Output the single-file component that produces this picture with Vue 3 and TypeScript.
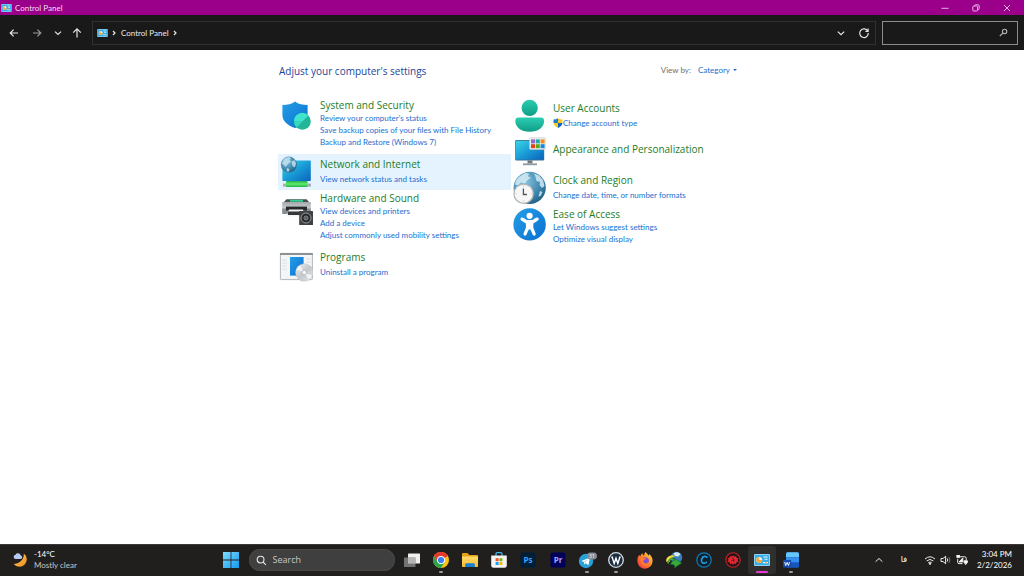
<script setup lang="ts">
import { ref } from 'vue'

interface Category {
  id: string
  title: string
  links: string[]
  shield?: boolean
}

const left: Category[] = [
  { id: 'security', title: 'System and Security', links: ["Review your computer's status", 'Save backup copies of your files with File History', 'Backup and Restore (Windows 7)'] },
  { id: 'network', title: 'Network and Internet', links: ['View network status and tasks'] },
  { id: 'hardware', title: 'Hardware and Sound', links: ['View devices and printers', 'Add a device', 'Adjust commonly used mobility settings'] },
  { id: 'programs', title: 'Programs', links: ['Uninstall a program'] },
]
const right: Category[] = [
  { id: 'users', title: 'User Accounts', links: ['Change account type'], shield: true },
  { id: 'appearance', title: 'Appearance and Personalization', links: [] },
  { id: 'clock', title: 'Clock and Region', links: ['Change date, time, or number formats'] },
  { id: 'ease', title: 'Ease of Access', links: ['Let Windows suggest settings', 'Optimize visual display'] },
]
const columns = [left, right]

const active = ref('network')
const query = ref('')
const taskQuery = ref('')

interface TaskApp {
  id: string
  label: string
  state?: 'open' | 'current'
}
const apps: TaskApp[] = [
  { id: 'taskview', label: 'Task View' },
  { id: 'chrome', label: 'Google Chrome', state: 'open' },
  { id: 'folder', label: 'File Explorer' },
  { id: 'store', label: 'Microsoft Store' },
  { id: 'ps', label: 'Photoshop' },
  { id: 'pr', label: 'Premiere Pro' },
  { id: 'telegram', label: 'Telegram', state: 'open' },
  { id: 'w', label: 'W', state: 'open' },
  { id: 'firefox', label: 'Firefox' },
  { id: 'idm', label: 'Download Manager' },
  { id: 'c', label: 'C' },
  { id: 'gear', label: 'Tools' },
  { id: 'cpl', label: 'Control Panel', state: 'current' },
  { id: 'word', label: 'Word', state: 'open' },
]
</script>

<template>
  <div class="window">
    <svg class="defs" width="0" height="0" aria-hidden="true">
      <defs>
        <linearGradient id="gBlue" x1="0" y1="0" x2="1" y2="1"><stop offset="0" stop-color="#249fe6" /><stop offset="1" stop-color="#0a6fd0" /></linearGradient>
        <linearGradient id="gScreen" x1="0" y1="0" x2="1" y2="1"><stop offset="0" stop-color="#3bd5e6" /><stop offset=".5" stop-color="#1a9bd6" /><stop offset="1" stop-color="#0964bd" /></linearGradient>
        <linearGradient id="gTeal" x1="0" y1="0" x2="0" y2="1"><stop offset="0" stop-color="#2bcdb2" /><stop offset="1" stop-color="#0e9e86" /></linearGradient>
        <linearGradient id="gGreen" x1="0" y1="0" x2="0" y2="1"><stop offset="0" stop-color="#22b04a" /><stop offset=".5" stop-color="#62ee6c" /><stop offset="1" stop-color="#22b04a" /></linearGradient>
        <linearGradient id="gMetal" x1="0" y1="0" x2="0" y2="1"><stop offset="0" stop-color="#a4a8ab" /><stop offset="1" stop-color="#e2e5e7" /></linearGradient>
        <linearGradient id="gDisc" x1="0" y1="0" x2="1" y2="1"><stop offset="0" stop-color="#f2f3f4" /><stop offset=".5" stop-color="#c3c8cc" /><stop offset="1" stop-color="#e6e8ea" /></linearGradient>
        <radialGradient id="gGlobe" cx=".35" cy=".3" r=".8"><stop offset="0" stop-color="#8cc4e0" /><stop offset=".6" stop-color="#4189af" /><stop offset="1" stop-color="#1f5a7e" /></radialGradient>
        <linearGradient id="gWin" x1="0" y1="0" x2="1" y2="1"><stop offset="0" stop-color="#7fdcfc" /><stop offset="1" stop-color="#1497f0" /></linearGradient>
        <linearGradient id="gMoon" x1="0" y1="0" x2="1" y2="1"><stop offset="0" stop-color="#ffd75e" /><stop offset="1" stop-color="#f0861c" /></linearGradient>
        <linearGradient id="gFox" x1="1" y1="0" x2="0" y2="1"><stop offset="0" stop-color="#ffe14a" /><stop offset=".45" stop-color="#ff8b25" /><stop offset="1" stop-color="#f3264f" /></linearGradient>
        <linearGradient id="gFolder" x1="0" y1="0" x2="0" y2="1"><stop offset="0" stop-color="#ffdc6b" /><stop offset="1" stop-color="#f8b92c" /></linearGradient>
        <symbol id="cpl" viewBox="0 0 16 12">
          <rect width="16" height="12" rx="1" fill="#8ad4f6" /><rect x="1" y="1" width="14" height="10" fill="#3badE6" />
          <circle cx="5.2" cy="6" r="3" fill="#e9f7fd" /><path d="M5.2 6V3a3 3 0 1 0 3 3z" fill="#f5a83c" />
          <path d="M9.5 3h4M10.5 5.2h3M9 8.6h5" stroke="#e9f7fd" stroke-width="1.1" /><circle cx="12" cy="8.6" r=".9" fill="#f5a83c" />
        </symbol>
      </defs>
    </svg>

    <header class="titlebar">
      <svg class="mini" viewBox="0 0 16 12"><use href="#cpl" /></svg>
      <h1 class="wtitle">Control Panel</h1>
      <div class="winbtns">
        <button aria-label="Minimize"><svg viewBox="0 0 10 10"><path d="M1.5 5.3h7" /></svg></button>
        <button aria-label="Restore"><svg viewBox="0 0 10 10"><rect x="1.8" y="3" width="4.8" height="5" rx="1" /><path d="M3.5 3V2.6Q3.5 1.8 4.4 1.8H7Q8.2 1.8 8.2 3v2.6q0 1-1 1h-.4" /></svg></button>
        <button aria-label="Close"><svg viewBox="0 0 10 10"><path d="M2 2l6 6M8 2l-6 6" /></svg></button>
      </div>
    </header>

    <nav class="navbar">
      <div class="navbtns">
        <button aria-label="Back"><svg viewBox="0 0 12 12"><path d="M10 6H2.3M5.6 2.6 2.2 6l3.4 3.4" /></svg></button>
        <button aria-label="Forward" class="dim"><svg viewBox="0 0 12 12"><path d="M2 6h7.700M6.400 2.600 9.800 6 6.400 9.400" /></svg></button>
        <button aria-label="Recent locations" class="narrow"><svg viewBox="0 0 12 12"><path d="M3 4.600 6 7.500l3-2.900" /></svg></button>
        <button aria-label="Up" class="narrow"><svg viewBox="0 0 12 12"><path d="M6 10.500V1.900M2.200 5.600 6 1.800l3.800 3.800" /></svg></button>
      </div>
      <div class="address">
        <svg class="mini" viewBox="0 0 16 12"><use href="#cpl" /></svg>
        <svg class="sep" viewBox="0 0 6 8"><path d="M2 2l2 2-2 2" /></svg>
        <a href="#" class="crumb">Control Panel</a>
        <svg class="sep" viewBox="0 0 6 8"><path d="M2 2l2 2-2 2" /></svg>
        <span class="grow"></span>
        <button aria-label="Previous locations"><svg viewBox="0 0 12 12"><path d="M2.8 4.6 6 7.6l3.2-3" /></svg></button>
        <button aria-label="Refresh"><svg viewBox="0 0 12 12"><path d="M9.8 4.2A4.3 4.3 0 1 0 10.3 6M10.1 1.6v2.8H7.4" /></svg></button>
      </div>
      <label class="search">
        <input v-model="query" type="text" aria-label="Search Control Panel" />
        <svg viewBox="0 0 12 12"><circle cx="7.2" cy="4.8" r="2.4" /><path d="M5.4 6.6 2 9.8" /></svg>
      </label>
    </nav>

    <main class="content">
      <div class="panel">
        <div class="heading">
          <h2>Adjust your computer's settings</h2>
          <div class="viewby"><span>View by:</span><button>Category<i class="caret"></i></button></div>
        </div>
        <div class="columns">
          <div v-for="(col, ci) in columns" :key="ci" class="column">
            <section
              v-for="c in col" :key="c.id" class="item"
              :class="{ tall: c.links.length > 1, active: active === c.id, single: !c.links.length }"
              @mouseenter="active = c.id"
            >
              <svg class="icon" viewBox="0 0 34 34" aria-hidden="true">
                <g v-if="c.id === 'security'">
                  <path d="M16 3.6C19.500 6.300 23.500 7 28.600 7v10c0 6-5 10.200-12.600 13C8.400 27.200 3.400 23 3.400 17V7C8.500 7 12.500 6.300 16 3.600z" fill="url(#gBlue)" />
                  <circle cx="23.400" cy="23.400" r="8.400" fill="#22b597" />
                  <path d="M15 23.400a8.400 8.400 0 0 1 14.400-5.900L23.400 23.400z" fill="#3fe4cd" /><path d="M15 23.400h8.400l-5.800 6A8.400 8.400 0 0 1 15 23.400z" fill="#35d9bd" />
                </g>
                <g v-else-if="c.id === 'network'">
                  <rect x="3.400" y="5.400" width="28.400" height="20.600" rx=".8" fill="url(#gScreen)" />
                  <rect x="4" y="28.600" width="28" height="3" fill="#a3aeb4" />
                  <rect x="7" y="26" width="21.600" height="6" rx="1" fill="url(#gGreen)" />
                  <circle cx="9.800" cy="9.600" r="8" fill="url(#gGlobe)" />
                  <path d="M5.500 3.500l4-1.600 2.500 1-1.500 2 1.500 1.500-3 2.600-2.500 3-2-2.500-1.800-1zM12.500 6.500l3-1.200 1.600 3-1.200 4.200-2.400-1.500zM8 13l2.500 1-1 3-2-1z" fill="#bfe0ee" opacity=".85" />
                </g>
                <g v-else-if="c.id === 'hardware'">
                  <path d="M7.500 8.200h20l3 3.200h-26z" fill="#4a4e51" /><rect x="11" y="8.800" width="13" height="2" fill="#35c890" />
                  <rect x="3.200" y="11" width="28.600" height="10.600" rx="1" fill="url(#gMetal)" /><path d="M3.200 17.500h28.600V23H3.200z" fill="#898e92" />
                  <rect x="7" y="15.600" width="21" height="4" fill="#27292b" /><path d="M10 18.500h14l2 7H7.500z" fill="#f1f3f4" /><path d="M9 20.500h13v3.500H9z" fill="#35383a" />
                  <rect x="20.200" y="20" width="13.800" height="14" rx=".6" fill="#3e4041" />
                  <circle cx="27" cy="27" r="5" fill="#25282a" stroke="#a6a9ab" stroke-width=".9" /><circle cx="27" cy="27" r="2.100" fill="#5b5e60" stroke="#939698" stroke-width=".7" />
                </g>
                <g v-else-if="c.id === 'programs'">
                  <rect x="1.400" y="5.400" width="32" height="26.200" rx=".8" fill="#f4f5f6" stroke="#aaafb2" stroke-width=".9" />
                  <path d="M1 5h32.800v2H1z" fill="#8c9195" />
                  <path d="M3.500 12h4M3.500 15h4M3.500 18h4M3.500 21h4M27.500 11h4M27.500 14h4" stroke="#d8dbde" stroke-width=".9" />
                  <rect x="11" y="9" width="13.600" height="18.600" fill="url(#gBlue)" />
                  <circle cx="25.300" cy="24.500" r="8.800" fill="url(#gDisc)" stroke="#b4b9bd" stroke-width=".4" /><path d="M25.300 24.500l-7.800-3a8.300 8.300 0 0 1 3.400-4zM25.300 24.500l7.800 3a8.300 8.300 0 0 1-3.400 4z" fill="#fff" opacity=".7" />
                  <circle cx="25.300" cy="24.500" r="2.400" fill="#eceef0" stroke="#a4a9ad" stroke-width=".6" /><circle cx="25.300" cy="24.500" r=".9" fill="#fff" />
                </g>
                <g v-else-if="c.id === 'users'">
                  <circle cx="17.700" cy="8.900" r="8.100" fill="url(#gTeal)" />
                  <path d="M6.700 18.600h22a3.400 3.400 0 0 1 3.400 3.400c0 6-5.600 10.800-14.400 10.800S3.300 28 3.300 22a3.400 3.400 0 0 1 3.400-3.400z" fill="url(#gTeal)" />
                </g>
                <g v-else-if="c.id === 'appearance'">
                  <rect x="3.200" y="5" width="29" height="20.400" rx="1" fill="#3b6f93" /><rect x="4" y="5.800" width="27.400" height="18.800" fill="url(#gScreen)" />
                  <path d="M15.500 25.400h5v3h-5z" fill="#70787e" /><path d="M11 28.400h14v1.800H11z" fill="#8f979c" />
                  <rect x="17.600" y="2.600" width="16.200" height="12" rx="1" fill="#eceeef" stroke="#c9cdd0" stroke-width=".5" />
                  <path d="M19 4.400h4v4h-4z" fill="#9b64c8" /><path d="M23.800 4.400h4v4h-4z" fill="#19b1a0" /><path d="M28.600 4.400h4v4h-4z" fill="#f78c1b" />
                  <path d="M19 9.200h4v4h-4z" fill="#e2431e" /><path d="M23.800 9.200h4v4h-4z" fill="#56ab1b" /><path d="M28.600 9.200h4v4h-4z" fill="#1788dc" />
                </g>
                <g v-else-if="c.id === 'clock'">
                  <circle cx="17.700" cy="16.800" r="16.100" fill="url(#gGlobe)" />
                  <path d="M7 6l6-4 4 .4-1 3 3 1-4 3-2 3-4-1-3 3-3-1 1-4zM22 2.500l5 2 4 4.500 1.500 6-2.500 2-2.500-3 .5-3-3.500-1-1-4zM28 20l2.500 1-2 4-2 .5z" fill="#d2ebf5" opacity=".85" />
                  <circle cx="11.600" cy="22.700" r="10.300" fill="#b3b6b8" /><circle cx="11.600" cy="22.700" r="9" fill="#f7f7f7" />
                  <path d="M11.400 17.500v6H15" fill="none" stroke="#53575b" stroke-width="1.300" /><path d="M11.600 14.500v1.400M11.600 29.500v1.400M3.400 22.700h1.400M18.400 22.700h1.400" stroke="#c0c2c4" stroke-width=".8" />
                </g>
                <g v-else>
                  <circle cx="17.600" cy="17.400" r="16.200" fill="url(#gBlue)" /><circle cx="17.600" cy="8.800" r="3.100" fill="#fff" />
                  <path d="M9 10.800q-1.400 1.500.2 2.700l4.700 3v4.300l-2.400 5.800q-.4 1.900 1.200 2.200 1.200.1 1.700-1l2.400-5.200h1.600l2.400 5.200q.5 1.100 1.700 1 1.600-.3 1.200-2.200l-2.400-5.800v-4.300l4.700-3q1.600-1.200.2-2.700-1-.8-2.300 0l-3.500 2.200h-5.600l-3.500-2.200q-1.300-.8-2.300 0z" fill="#fff" />
                </g>
              </svg>
              <div class="texts">
                <h3><a href="#">{{ c.title }}</a></h3>
                <ul v-if="c.links.length">
                  <li v-for="l in c.links" :key="l">
                    <svg v-if="c.shield" class="uac" viewBox="0 0 10 10"><path d="M5 .3q2 1.200 4.500 1.200V5H5z" fill="#fcc921" /><path d="M5 .3Q3 1.500.5 1.500V5H5z" fill="#1880d4" /><path d="M.5 5H5v4.900Q1 8.300.5 5z" fill="#fcc921" /><path d="M9.500 5H5v4.900Q9 8.300 9.500 5z" fill="#1167bd" /></svg>
                    <a href="#">{{ l }}</a>
                  </li>
                </ul>
              </div>
            </section>
          </div>
        </div>
      </div>
    </main>

    <footer class="taskbar">
      <button class="weather">
        <svg viewBox="0 0 18 18"><path d="M12.500 1.500a7.800 7.800 0 1 1-10.700 11.200c5.500-.2 11.200-4.400 10.700-11.200z" fill="url(#gMoon)" /><path d="M3.600 7.500a2.400 2.400 0 0 1 .1-4.700 3 3 0 0 1 5.400.6 2.100 2.100 0 0 1 0 4.100z" fill="#b4ccf6" /></svg>
        <span><b>-14°C</b><em>Mostly clear</em></span>
      </button>

      <div class="center">
        <button class="start" aria-label="Start"><svg viewBox="0 0 18 18"><path d="M1 1h7.600v7.600H1zM9.400 1H17v7.600H9.400zM1 9.400h7.600V17H1zM9.400 9.400H17V17H9.400z" fill="url(#gWin)" /></svg></button>
        <label class="pill">
          <svg viewBox="0 0 12 12"><circle cx="5" cy="5" r="3.700" /><path d="M7.800 7.800l3 3" /></svg>
          <input v-model="taskQuery" type="text" placeholder="Search" aria-label="Search" />
        </label>
        <div class="apps">
          <button v-for="a in apps" :key="a.id" :aria-label="a.label" :class="a.state">
            <svg viewBox="0 0 18 18">
              <g v-if="a.id === 'taskview'"><rect x="5" y="2.600" width="12" height="10" rx=".6" fill="#f0f0f0" /><rect x="1" y="6.400" width="11.500" height="9.600" rx=".6" fill="#7c7c7c" opacity=".9" /><path d="M5 6.400h7.500v6.200H5z" fill="#b6b6b6" /></g>
              <g v-else-if="a.id === 'chrome'"><circle cx="9" cy="9" r="8" fill="#fbc116" /><path d="M9 9 2.070 5A8 8 0 0 1 15.930 5z" fill="#e33b2e" /><path d="M9 5h6.930A8 8 0 0 0 2.070 5L5.500 11z" fill="#e33b2e" /><path d="M2.070 5A8 8 0 0 0 9 17l3.500-6H5.500z" fill="#2ba24c" /><circle cx="9" cy="9" r="4" fill="#fff" /><circle cx="9" cy="9" r="3.100" fill="#3a7ef0" /></g>
              <g v-else-if="a.id === 'folder'"><path d="M1 3q0-1 1-1h4.500l1.800 2H16q1 0 1 1v10.500H1z" fill="#e5a11c" /><path d="M1 5.600h16V15q0 1-1 1H2q-1 0-1-1z" fill="url(#gFolder)" /><path d="M4.200 16v-2.400q0-1.400 1.400-1.400h6.800q1.400 0 1.400 1.400V16z" fill="#1a7fd0" /></g>
              <g v-else-if="a.id === 'store'"><path d="M6 5V2.700Q6 1.600 7.100 1.600h3.800q1.100 0 1.100 1.100V5" fill="none" stroke="#41b5ec" stroke-width="1.300" /><path d="M1.200 4.400h15.600v10.200q0 2.200-2.200 2.200H3.400q-2.200 0-2.200-2.200z" fill="#f3f4f5" /><path d="M5.600 7.200h3v3h-3z" fill="#f15024" /><path d="M9.400 7.200h3v3h-3z" fill="#7db900" /><path d="M5.600 11h3v3h-3z" fill="#18a1ea" /><path d="M9.400 11h3v3h-3z" fill="#fbb700" /></g>
              <g v-else-if="a.id === 'ps'"><rect x="1.500" y="1.500" width="15" height="15" rx="2.600" fill="#001e36" /><text x="9" y="11.800" class="adobe" fill="#31a8ff">Ps</text></g>
              <g v-else-if="a.id === 'pr'"><rect x="1.500" y="1.500" width="15" height="15" rx="2.600" fill="#00005b" /><text x="9" y="11.800" class="adobe" fill="#a9a4ff">Pr</text></g>
              <g v-else-if="a.id === 'telegram'"><circle cx="8" cy="10" r="7.200" fill="#28a0d8" /><path d="M3.300 9.900 12 6.500l-1.600 7.800-2.700-2-1.400 1.300-.4-2.700z" fill="#fff" /><path d="M6 10.900l4.300-2.800-3.500 3.700z" fill="#9bc8de" /><rect x="9" y="1.500" width="10" height="7" rx="3.400" fill="#858b90" /><text x="13.900" y="6.900" class="count" fill="#fff">31</text></g>
              <g v-else-if="a.id === 'w'"><circle cx="9" cy="9" r="7.300" fill="#1a2c40" stroke="#d6dde3" stroke-width="1.300" /><path d="M4.300 6.200h1.800M11.900 6.200h1.800M5.200 6.200l2 6.300L9 7.200l1.800 5.300 2-6.300" fill="none" stroke="#fff" stroke-width="1.400" /></g>
              <g v-else-if="a.id === 'firefox'"><path d="M9.500 1q2.400 1.600 2.700 3.600 1.200-.3 1.200-1.600 3.400 3.300 3.200 7.200A7.600 7.600 0 0 1 1.400 10q-.2-3.500 1.700-6.300l1 1.800Q5.200 2.600 6.400 2.300 6.500 4 8 4.500 8.200 2.300 9.500 1z" fill="url(#gFox)" /><circle cx="9.200" cy="10" r="3.700" fill="#854cd8" /><path d="M4.300 7.500q3-1.600 6.200.6-2.700.1-3.200 1.700-.4 2 2.200 2.600 2.300.1 3.400-1.700-.2 4-4 4.300-4.800-.3-4.600-7.500z" fill="#ff7d2a" /></g>
              <g v-else-if="a.id === 'idm'"><circle cx="11.500" cy="6.500" r="5.700" fill="#3a80be" /><path d="M8.500 2.500q4-2.600 7 .4l-2.200 2.600-3.300-.5z" fill="#dcebf3" /><path d="M1 10.500Q1 5 7 4.200l4 .8Q4.900 6.200 4.800 11z" fill="#f6d93c" /><path d="M2 12Q3.400 6 9 6.200l-.4 2.600Q4 8.600 3.600 13z" fill="#4c9e3c" /><path d="M5.500 13.800q.2-4 4-4.600l-1.200-2.400 8.600 5.200-7.500 5 .1-2.500q-2.200-1.800-4-.7z" fill="#35ac3a" stroke="#0f4c1b" stroke-width=".5" /></g>
              <g v-else-if="a.id === 'c'"><circle cx="9" cy="9" r="7.200" fill="#121f29" stroke="#0d7fbd" stroke-width="1.200" /><path d="M12.300 6.800Q11.400 5.300 9.600 5.400 7 5.900 6.400 9q0 3.500 3.400 3.100 1.200-.2 2-1.300" fill="none" stroke="#1898dc" stroke-width="1.700" /></g>
              <g v-else-if="a.id === 'gear'"><circle cx="9" cy="9" r="7.200" fill="#241518" stroke="#c32128" stroke-width="1.100" /><path d="M9 4.200l1.200 1.600 2-.8.200 2h2l-1 2 1.200 1.800-2.200.3-.4 2.200-1.900-1L9 14l-1.100-1.700-1.900 1-.4-2.200-2.200-.3L4.600 9l-1-2h2l.2-2 2 .8z" fill="#e8282e" /><path d="M7.300 9.400h1.300M9.800 8v2.800M8.300 7.400h1.100" stroke="#241518" stroke-width=".9" /></g>
              <use v-else-if="a.id === 'cpl'" href="#cpl" x="1" y="3" width="16" height="12" />
              <g v-else><rect x="4" y="1.300" width="13" height="15.400" rx="1.500" fill="#1757bd" /><path d="M5.500 1.300h10Q17 1.300 17 2.800v3.500H4V2.800q0-1.500 1.500-1.500z" fill="#65c5f7" /><path d="M4 6.300h13v5H4z" fill="#328fea" /><rect x="1" y="9" width="8.200" height="7.600" rx="1" fill="#164bad" /><path d="M2.700 11l1 3.600 1.400-3.200 1.400 3.200 1-3.600" fill="none" stroke="#fff" stroke-width=".9" /></g>
            </svg>
          </button>
        </div>
      </div>

      <div class="tray">
        <button aria-label="Show hidden icons" class="chev"><svg viewBox="0 0 12 12"><path d="M2.600 7.700 6 4.500l3.400 3.200" /></svg></button>
        <button class="lang" lang="fa">فا</button>
        <button class="status" aria-label="Network, volume and battery">
          <svg viewBox="0 0 12 12"><path d="M1 5q5-4.400 10 0M2.700 6.900q3.300-2.900 6.600 0M4.300 8.700q1.700-1.400 3.400 0" /><circle cx="6" cy="9.800" r=".7" fill="#fff" /></svg>
          <svg viewBox="0 0 12 12"><path d="M1 4.500h2L5.600 2.300v7.400L3 7.500H1zM7.200 4.500q1.100 1.500 0 3" /><path d="M8.800 3q2.300 3 0 6" opacity=".45" /></svg>
          <svg viewBox="0 0 12 12"><path d="M3.500 2.800h5.300q1.400 0 1.400 1.400v2M6.500 9.600H3q-1.300 0-1.300-1.300V5" /><path d="M3 7.900 6.800 4v3.900z" fill="#fff" /><path d="M.9 1v2.600h2.600V1M8 6.800h3.400v1.400q0 1.300-1.700 1.300T8 8.200zM9.700 9.500V11" fill="#fff" /></svg>
        </button>
        <button class="time"><span>3:04 PM</span><span>2/2/2026</span></button>
      </div>
    </footer>
  </div>
</template>

<style>
body { margin: 0; background: #fff; }
</style>

<style scoped>
.window { min-height: 100vh; display: flex; flex-direction: column; background: #fff; font: 8px/12px Lato, "Open Sans", sans-serif; color: #fff; }
.defs { position: absolute; }
button { border: 0; padding: 0; background: none; color: inherit; font: inherit; display: flex; align-items: center; justify-content: center; }
input { border: 0; padding: 0; background: none; outline: 0; color: inherit; font: inherit; min-width: 0; flex: 1; }
a { color: inherit; text-decoration: none; }
h1, h2, h3, ul { margin: 0; padding: 0; font-weight: 400; list-style: none; }

.titlebar { height: 15px; display: flex; align-items: center; background: #9b008a; }
.mini { width: 11px; height: 8px; flex: none; }
.titlebar .mini { margin: 0 3px 0 1px; }
.wtitle { font-size: 8px; flex: 1; color: #f3dcf1; }
.winbtns { display: flex; padding-right: 2px; }
.winbtns button { width: 31px; height: 15px; }
.winbtns svg { width: 10px; height: 10px; fill: none; stroke: #e2b6dd; stroke-width: 1; }

.navbar { height: 35px; display: flex; align-items: center; background: #191919; padding-right: 6px; gap: 6px; }
.navbtns { display: flex; width: 86px; padding-left: 3px; box-sizing: border-box; }
.navbtns button { width: 23px; height: 24px; }
.navbtns .narrow { width: 19px; }
.navbar svg { fill: none; stroke: #e6e6e6; stroke-width: 1.2; }
.navbar button svg { width: 12px; height: 12px; }
.navbar .dim svg { stroke: #9b9b9b; }
.address { flex: 1; height: 24px; box-sizing: border-box; border: 1px solid #303030; display: flex; align-items: center; padding: 0 0 0 4px; }
.address .mini { stroke: none; }
.address .sep { width: 6px; height: 8px; margin: 0 4px 0 3px; }
.grow { flex: 1; }
.crumb { color: #ececec; }
.address button { width: 23px; height: 22px; }
.search { width: 136px; height: 24px; box-sizing: border-box; border: 1px solid #8c8c8c; display: flex; align-items: center; padding: 0 8px 0 6px; }
.search svg { width: 11px; height: 11px; stroke: #b4b4b4; }

.content { flex: 1; padding-top: 13px; }
.panel { max-width: 468px; margin: 0 auto; }
.heading { display: flex; justify-content: space-between; align-items: center; padding: 0 9px 0 1px; height: 16px; }
.heading h2 { font: 10px/16px "Open Sans", sans-serif; color: #1d4499; }
.viewby { display: flex; gap: 7px; padding-bottom: 2px; color: #6f6f6f; }
.viewby button { color: #1a6fd0; gap: 3px; }
.caret { border: 2px solid transparent; border-top-color: #1a6fd0; border-bottom: 0; }
.columns { display: grid; grid-template-columns: 1fr 1fr; padding: 18px 2px 0 0; }
.column + .column { padding-top: 1px; }
.item { display: flex; min-height: 36px; }
.column .icon { width: 34px; height: 34px; margin: 1px 7px 0 1px; flex: none; }
.item.active { background: #e5f3fe; }
.texts { padding-top: 3px; }
.tall .texts { padding: 2px 0 6px; }
.single .texts { padding-top: 8px; }
.item h3 { font: 10px/15px "Open Sans", sans-serif; color: #1c7d1f; }
.item.tall h3 { line-height: 13px; }
.item ul { color: #1a6fd0; padding-top: 1px; }
.item.tall ul { padding-top: 0; }
.item li { display: flex; align-items: center; height: 12px; white-space: nowrap; }
.uac { width: 10px; height: 10px; }

.taskbar { height: 32px; display: grid; grid-template-columns: 1fr auto 1fr; align-items: center; background: #211f1e; box-shadow: inset 0 1px #3a3938; }
.weather { justify-content: flex-start; gap: 5px; padding-left: 12px; text-align: left; }
.weather svg { width: 17px; height: 17px; }
.weather span { display: flex; flex-direction: column; line-height: 11px; }
.weather b, .weather em { font-weight: 400; font-style: normal; }
.weather em { color: #c6c6c6; }
.center { display: flex; align-items: center; padding-right: 2px; }
.start { width: 29px; height: 32px; }
.start svg { width: 18px; height: 18px; }
.pill { width: 146px; height: 22px; box-sizing: border-box; margin: 0 3px; border-radius: 11px; background: #3f3f3f; box-shadow: inset 0 0 0 1px #474747; display: flex; align-items: center; gap: 6px; padding: 0 8px 0 7px; }
.pill svg { width: 11px; height: 11px; fill: none; stroke: #e6e6e6; stroke-width: 1.2; flex: none; }
.pill input { font: 9px/12px "Open Sans", sans-serif; }
.pill input::placeholder { color: #c8c8c8; opacity: 1; }
.apps { display: flex; width: 408px; justify-content: space-between; }
.apps button { position: relative; width: 28px; height: 28px; border-radius: 3px; }
.apps svg { width: 18px; height: 18px; overflow: visible; }
.apps .current { background: #302f2e; }
.apps .open::after, .apps .current::after { content: ""; position: absolute; left: 50%; bottom: 1px; width: 4px; height: 2px; margin-left: -2px; border-radius: 1px; background: #9c9c9c; }
.apps .current::after { width: 12px; margin-left: -6px; background: #e83ad3; }
.adobe { font: 700 8px "Open Sans", sans-serif; text-anchor: middle; }
.count { font: 5px "Open Sans", sans-serif; text-anchor: middle; }
.tray { display: flex; justify-content: flex-end; align-items: center; padding-right: 12px; }
.tray svg { width: 12px; height: 12px; fill: none; stroke: #eee; stroke-width: 1; }
.chev { width: 20px; height: 24px; }
.lang { width: 30px; height: 24px; font: 8px/12px "DejaVu Sans", sans-serif; }
.status { gap: 4px; padding: 0 5px; height: 24px; }
.time { flex-direction: column; align-items: flex-end; line-height: 11px; margin-left: 4px; }
</style>
